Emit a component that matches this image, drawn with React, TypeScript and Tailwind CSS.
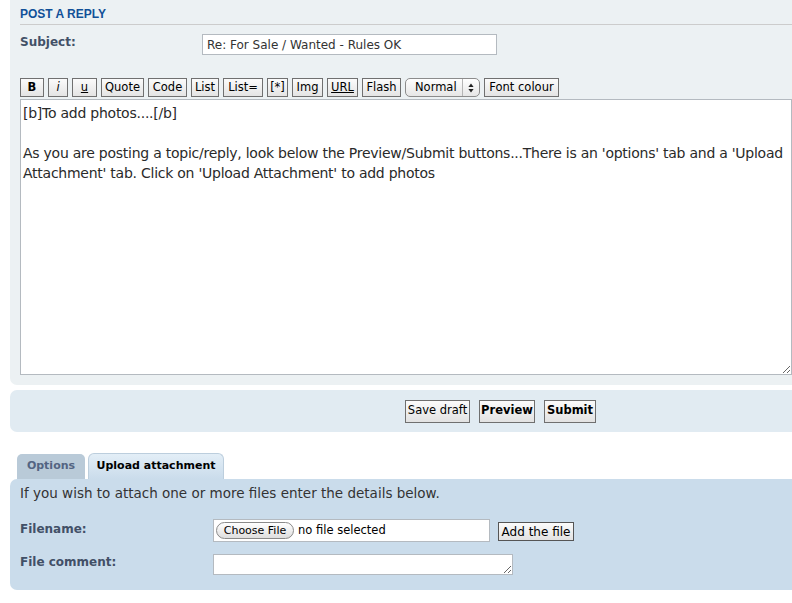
import { ReactNode } from 'react'

const toolbar: { label: string; w: string; extra?: string }[] = [
  { label: 'B', w: 'w-[24px]', extra: 'font-bold' },
  { label: 'i', w: 'w-[20px]', extra: 'italic' },
  { label: 'u', w: 'w-[25px]', extra: 'underline' },
  { label: 'Quote', w: 'w-[43px]' },
  { label: 'Code', w: 'w-[39px]' },
  { label: 'List', w: 'w-[28px]' },
  { label: 'List=', w: 'w-[40px]' },
  { label: '[*]', w: 'w-[21px]' },
  { label: 'Img', w: 'w-[31px]' },
  { label: 'URL', w: 'w-[31px]', extra: 'underline' },
  { label: 'Flash', w: 'w-[39px]' },
]

function ToolButton({ className, children }: { className: string; children: ReactNode }) {
  return (
    <button
      className={`h-[19px] shrink-0 border border-[#707070] bg-gradient-to-b from-[#fbfbfb] to-[#e4e4e4] text-[11.5px] leading-none text-black ${className}`}
    >
      {children}
    </button>
  )
}

function FormButton({ className, children }: { className: string; children: ReactNode }) {
  return (
    <button
      className={`h-[23px] shrink-0 border border-[#6f6f6f] bg-gradient-to-b from-[#fbfbfb] to-[#e2e2e2] text-[11.5px] leading-none text-black ${className}`}
    >
      {children}
    </button>
  )
}

const message =
  "[b]To add photos....[/b]\n\nAs you are posting a topic/reply, look below the Preview/Submit buttons...There is an 'options' tab and a 'Upload Attachment' tab. Click on 'Upload Attachment' to add photos"

export default function App() {
  return (
    <div className="w-[792px] h-[603px] overflow-hidden bg-white font-['DejaVu_Sans',sans-serif]">
      {/* Post a reply panel */}
      <div className="ml-[10px] w-[800px] rounded-bl-[7px] bg-[#ECF1F3] pl-[10px] pt-[6px] pb-[10px]">
        <h3 className="h-[19px] border-b border-[#CCCCCC] font-['Liberation_Sans',sans-serif] text-[12px] font-bold uppercase leading-[16px] text-[#115098]">
          Post a reply
        </h3>

        <div className="mt-[9px] flex items-start">
          <label className="w-[182px] shrink-0 text-[12px] font-bold leading-[16px] text-[#425067]">Subject:</label>
          <input
            defaultValue="Re: For Sale / Wanted - Rules OK"
            className="h-[21px] w-[295px] border border-[#B4BAC0] bg-white pl-[4px] text-[12px] text-[#333] outline-none"
          />
        </div>

        <div className="mt-[23px] flex items-center gap-[4px]">
          {toolbar.map(b => (
            <ToolButton key={b.label} className={`${b.w} ${b.extra ?? ''}`}>
              {b.label}
            </ToolButton>
          ))}
          <div className="flex h-[19px] w-[75px] shrink-0 items-center rounded-[5px] border border-[#8c8c8c] bg-gradient-to-b from-[#ffffff] to-[#e6e6e6]">
            <span className="pl-[9px] text-[11.5px] leading-none text-black">Normal</span>
            <span className="ml-auto flex h-full w-[17px] items-center justify-center border-l border-[#b5b5b5]">
              <svg width="6" height="10" viewBox="0 0 6 10">
                <path d="M3 0.5 L5.6 4 L0.4 4 Z" fill="#222" />
                <path d="M3 9.5 L5.6 6 L0.4 6 Z" fill="#222" />
              </svg>
            </span>
          </div>
          <ToolButton className="w-[75px]">Font colour</ToolButton>
        </div>

        <textarea
          defaultValue={message}
          className="mt-[2px] block h-[276px] w-[772px] border border-[#B4BAC0] bg-white px-[2px] pt-[3px] text-[14px] leading-[20px] tracking-[-0.25px] text-[#2a2a2a] outline-none"
        />
      </div>

      {/* Submit buttons */}
      <div className="mt-[5px] ml-[10px] flex h-[42px] w-[800px] items-center gap-[9px] rounded-l-[7px] bg-[#E1EBF2] pl-[395px]">
        <FormButton className="w-[65px]">Save draft</FormButton>
        <FormButton className="w-[56px] font-bold">Preview</FormButton>
        <FormButton className="w-[52px] font-bold">Submit</FormButton>
      </div>

      {/* Tabs */}
      <div className="mt-[21px] ml-[17px] flex items-end gap-[3px]">
        <div className="flex h-[25px] w-[68px] items-center justify-center rounded-t-[5px] bg-[#B9CAD8] text-[11px] font-bold text-[#536482]">
          Options
        </div>
        <div className="flex h-[26px] w-[136px] items-center justify-center rounded-t-[6px] border border-b-0 border-[#BCCEDD] bg-gradient-to-b from-[#E3EEF7] to-[#CADCEB] text-[11px] font-bold text-black">
          Upload attachment
        </div>
      </div>

      {/* Attachment panel */}
      <div className="ml-[10px] h-[111px] w-[800px] rounded-l-[7px] bg-[#CADCEB] pl-[10px] pt-[5px]">
        <p className="text-[13.5px] leading-[18px] text-[#333]">
          If you wish to attach one or more files enter the details below.
        </p>

        <div className="mt-[17px] flex items-start">
          <label className="w-[193px] shrink-0 pt-[2px] text-[12px] font-bold leading-[16px] text-[#425067]">Filename:</label>
          <div className="flex h-[23px] w-[277px] items-center border border-[#B4BAC0] bg-white pl-[2px]">
            <span className="flex h-[17px] w-[78px] items-center justify-center rounded-full border border-[#8a8a8a] bg-gradient-to-b from-[#ffffff] to-[#dedede] text-[11px] leading-none text-black">
              Choose File
            </span>
            <span className="pl-[4px] text-[11.5px] leading-none text-black">no file selected</span>
          </div>
          <button className="ml-[8px] mt-[3px] h-[19px] w-[76px] border border-[#555] bg-gradient-to-b from-[#fbfbfb] to-[#e2e2e2] text-[12px] leading-none text-black">
            Add the file
          </button>
        </div>

        <div className="mt-[12px] flex items-start">
          <label className="w-[193px] shrink-0 text-[12px] font-bold leading-[16px] text-[#425067]">File comment:</label>
          <textarea className="block h-[21px] w-[300px] border border-[#B4BAC0] bg-white outline-none" />
        </div>
      </div>
    </div>
  )
}
